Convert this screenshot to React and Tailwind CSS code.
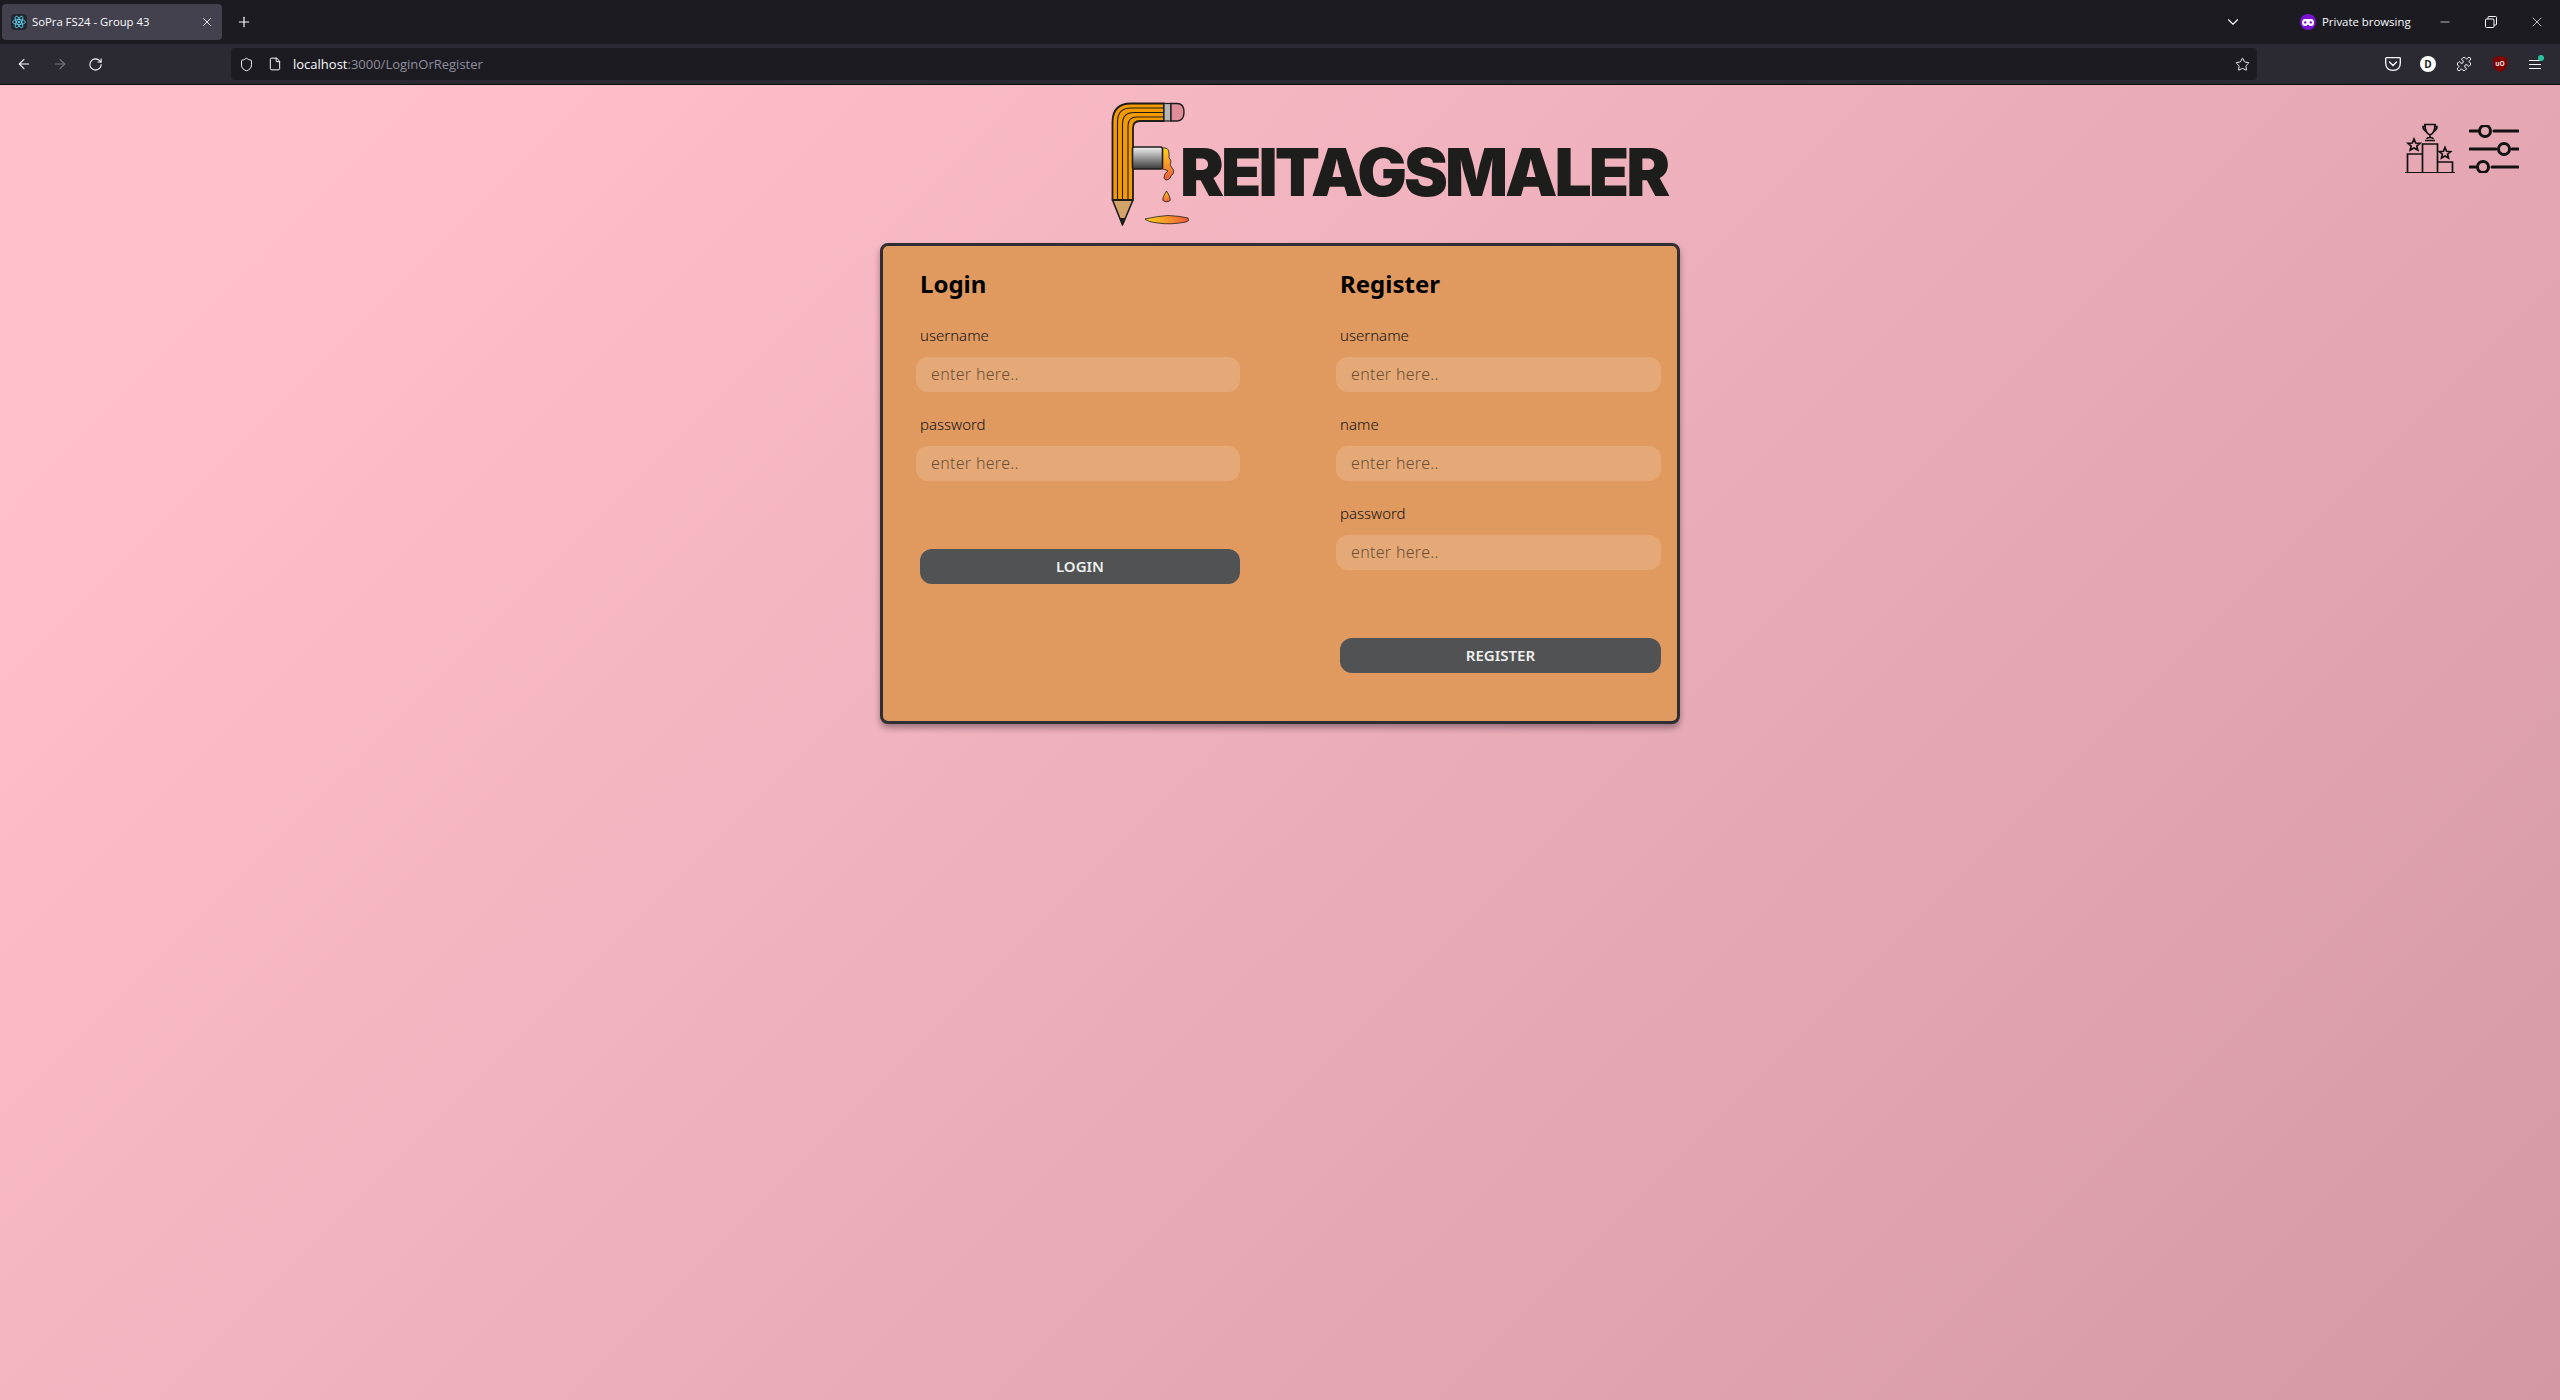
import { ArrowLeft, ArrowRight, RotateCw, Shield, File, Star, X, Plus, ChevronDown, Minus, Puzzle } from 'lucide-react';

const uiFont = "font-['Open_Sans','Noto_Sans',sans-serif]";

function PencilLogo() {
  return (
    <svg width="130" height="150" viewBox="0 0 130 150" className="shrink-0">
      <defs>
        <linearGradient id="metal" x1="0" y1="0" x2="0" y2="1">
          <stop offset="0" stopColor="#f2f2f2" />
          <stop offset="0.55" stopColor="#8d8d8d" />
          <stop offset="1" stopColor="#3a3a3a" />
        </linearGradient>
        <linearGradient id="paint" x1="0" y1="0" x2="0" y2="1">
          <stop offset="0" stopColor="#ffd319" />
          <stop offset="1" stopColor="#ee5b3c" />
        </linearGradient>
        <linearGradient id="puddle" x1="0" y1="0" x2="1" y2="0">
          <stop offset="0" stopColor="#ffd319" />
          <stop offset="1" stopColor="#ee5b3c" />
        </linearGradient>
      </defs>
      {/* pencil tip */}
      <path d="M22.5 110 L43 110 L32.5 135 Z" fill="#d4a36a" stroke="#1d1d1b" strokeWidth="1.6" strokeLinejoin="round" />
      <path d="M29.5 128 L35.5 128 L32.5 135 Z" fill="#1d1d1b" />
      {/* body */}
      <path d="M22.5 110 V32 Q22.5 13.5 41 13.5 H74 V31 H50 Q43 31 43 38 V110 Z" fill="#f59a00" stroke="#1d1d1b" strokeWidth="1.8" strokeLinejoin="round" />
      <path d="M27.5 110 V32 Q27.5 18 41 18 H74" fill="none" stroke="#1d1d1b" strokeWidth="1.1" />
      <path d="M32.5 110 V34 Q32.5 22.5 44 22.5 H74" fill="none" stroke="#1d1d1b" strokeWidth="1.1" />
      <path d="M38 110 V36 Q38 27 47 27 H74" fill="none" stroke="#1d1d1b" strokeWidth="1.1" />
      {/* band and eraser */}
      <rect x="74" y="13.5" width="7" height="17.5" fill="#b5b5b5" stroke="#1d1d1b" strokeWidth="1.2" />
      <path d="M81 13.5 H87 Q94 13.5 94 22 Q94 31 87 31 H81 Z" fill="#df8d99" stroke="#1d1d1b" strokeWidth="1.4" />
      {/* paint running out of the tube */}
      <path d="M72 58 Q79 57 79 63 Q78 68 81 71 Q79 75 82 78 Q85 80 83 84 Q81 85 80 88 Q76 92 74 88 Q74 83 78 81 Q75 79 72 79 Z" fill="url(#paint)" stroke="#1d1d1b" strokeWidth="0.8" />
      <rect x="42.5" y="57" width="30" height="22" rx="2" fill="url(#metal)" stroke="#1d1d1b" strokeWidth="1.6" />
      {/* drop and puddle */}
      <path d="M76.5 101 Q82 110 79.5 111 Q76.5 112.5 73.5 111 Q71 110 76.5 101 Z" fill="url(#paint)" stroke="#1d1d1b" strokeWidth="0.8" />
      <path d="M55 129 Q68 126 78 125.5 Q90 126 98 128 Q100 131 96 132 Q80 135 68 133 Q58 132 55 129 Z" fill="url(#puddle)" stroke="#1d1d1b" strokeWidth="0.8" />
    </svg>
  );
}

function PodiumIcon() {
  return (
    <svg width="50" height="50" viewBox="0 0 50 50" fill="none" stroke="#111" strokeWidth="1.7" className="shrink-0">
      <path d="M0 50 H50" strokeWidth="1.8" />
      <path d="M2.5 50 V31 H17.5 M17.5 50 V21 H32.5 V50 M32.5 39 H47.5 V50" />
      <path d="M19 1.5 H31 M20 1.5 C20 8 22 11 25 12 C28 11 30 8 30 1.5 M20 3.5 H18 C18 7 20 8 22 9 M30 3.5 H32 C32 7 30 8 28 9 M25 12 V15 M22 16 C22 14 28 14 28 16 M20 17.5 H30" />
      <path d="M9 16 L10.7 20 L15 20.3 L11.8 23 L12.8 27 L9 24.9 L5.2 27 L6.2 23 L3 20.3 L7.3 20 Z" />
      <path d="M40 24.5 L41.6 28.3 L45.6 28.6 L42.6 31.2 L43.5 35 L40 33 L36.5 35 L37.4 31.2 L34.4 28.6 L38.4 28.3 Z" />
    </svg>
  );
}

function SlidersIcon() {
  return (
    <svg width="50" height="48" viewBox="0 0 50 48" fill="none" stroke="#111" strokeWidth="3" strokeLinecap="round" className="shrink-0 mt-[2px]">
      <path d="M1 6 H9 M25 6 H49" />
      <circle cx="16" cy="6" r="5.5" />
      <path d="M1 24 H27 M43 24 H49" />
      <circle cx="35" cy="24" r="5.5" />
      <path d="M1 42 H7 M23 42 H49" />
      <circle cx="14" cy="42" r="5.5" />
    </svg>
  );
}

function ReactFavicon() {
  return (
    <div className="w-4 h-4 rounded-sm bg-[#23272f] flex items-center justify-center shrink-0">
      <svg width="14" height="14" viewBox="-12 -12 24 24" fill="none" stroke="#61dafb" strokeWidth="1.4">
        <circle r="2" fill="#61dafb" stroke="none" />
        <ellipse rx="11" ry="4.2" />
        <ellipse rx="11" ry="4.2" transform="rotate(60)" />
        <ellipse rx="11" ry="4.2" transform="rotate(120)" />
      </svg>
    </div>
  );
}

function BrowserChrome() {
  return (
    <div className={`${uiFont} shrink-0`}>
      {/* tab strip */}
      <div className="h-11 bg-[#1c1b22] flex items-center text-[#fbfbfe]">
        <div className="ml-[2px] w-[220px] h-9 rounded bg-[#42414d] flex items-center pl-[9px] pr-[8px]">
          <ReactFavicon />
          <span className="ml-[5px] text-[11.3px] flex-1 whitespace-nowrap">SoPra FS24 - Group 43</span>
          <X size={14} strokeWidth={1.5} />
        </div>
        <Plus size={16} strokeWidth={1.8} className="ml-[14px]" />
        <div className="flex-1" />
        <ChevronDown size={18} strokeWidth={1.5} />
        <div className="ml-[58px] w-[16px] h-[16px] rounded-full bg-[#7a12d4] flex items-center justify-center">
          <svg width="12" height="7" viewBox="0 0 12 7">
            <path d="M3 0 H9 Q12 0 12 3.5 Q12 7 9 7 Q7.5 7 6 5.5 Q4.5 7 3 7 Q0 7 0 3.5 Q0 0 3 0 Z" fill="#fff" />
            <circle cx="3.2" cy="3.4" r="1.2" fill="#7a12d4" />
            <circle cx="8.8" cy="3.4" r="1.2" fill="#7a12d4" />
          </svg>
        </div>
        <span className="ml-[6px] text-[11.4px] w-[88px] whitespace-nowrap">Private browsing</span>
        <Minus size={14} strokeWidth={1.2} className="ml-[28px]" />
        <svg width="12" height="12" viewBox="0 0 12 12" fill="none" stroke="#fbfbfe" className="ml-[33px]">
          <rect x="0.5" y="3" width="8.5" height="8.5" rx="1" />
          <path d="M3 3 V1.5 Q3 .5 4 .5 H10.5 Q11.5 .5 11.5 1.5 V8 Q11.5 9 10.5 9 H9" />
        </svg>
        <X size={16} strokeWidth={1.1} className="ml-[32px] mr-[15px]" />
      </div>
      {/* nav bar */}
      <div className="h-[41px] bg-[#2b2a33] border-b border-[#0c0c0d] flex items-center text-[#fbfbfe]">
        <ArrowLeft size={16} strokeWidth={1.6} className="ml-[16px]" />
        <ArrowRight size={16} strokeWidth={1.6} className="ml-[20px] text-[#77767c]" />
        <RotateCw size={15} strokeWidth={1.7} className="ml-[20px]" />
        <div className="ml-[128px] flex-1 h-8 rounded bg-[#1c1b22] flex items-center pl-[8px] pr-[7px]">
          <Shield size={15} strokeWidth={1.5} />
          <File size={14} strokeWidth={1.7} className="ml-[14px]" />
          <span className="ml-[11px] mt-[1px] text-[13px] whitespace-nowrap">localhost<span className="text-[#8f8f9d]">:3000/LoginOrRegister</span></span>
          <div className="flex-1" />
          <Star size={15} strokeWidth={1.5} />
        </div>
        {/* pocket */}
        <svg width="16" height="14" viewBox="0 0 16 14" fill="none" stroke="#fbfbfe" strokeWidth="1.3" className="ml-[128px]">
          <path d="M1.5 .7 H14.5 Q15.3 .7 15.3 1.5 V6 Q15.3 13.3 8 13.3 Q.7 13.3 .7 6 V1.5 Q.7 .7 1.5 .7 Z" />
          <path d="M4.5 5 L8 8.5 L11.5 5" strokeLinecap="round" />
        </svg>
        <div className="ml-[19px] w-4 h-4 rounded-full bg-white text-[#1c1b22] text-[10px] font-bold flex items-center justify-center">D</div>
        <Puzzle size={16} strokeWidth={1.5} className="ml-[20px]" />
        <svg width="14" height="16" viewBox="0 0 14 16" className="ml-[21px]">
          <path d="M7 0 L14 2 V8 Q14 13 7 16 Q0 13 0 8 V2 Z" fill="#800000" />
          <text x="7" y="10" textAnchor="middle" fontSize="6.5" fontWeight="700" fill="#e8e8e8">uO</text>
        </svg>
        <div className="relative ml-[22px] mr-[19px] w-3 flex flex-col gap-[3px]">
          <div className="h-px bg-[#fbfbfe]" />
          <div className="h-px bg-[#fbfbfe]" />
          <div className="h-px bg-[#fbfbfe]" />
          <div className="absolute -top-[5px] -right-[3px] w-[6px] h-[6px] rounded-full bg-[#2ac3a2]" />
        </div>
      </div>
    </div>
  );
}

function Field({ label }) {
  return (
    <div>
      <label className="block pl-1 text-[15px] leading-[22px] font-light text-[#111]">{label}</label>
      <input
        placeholder="enter here.."
        className="mt-[11px] block w-full h-[35px] rounded-xl bg-white/15 pl-[15px] pb-[2px] text-[16px] font-light tracking-[0.3px] outline-none placeholder:text-[#6e4f35]"
      />
    </div>
  );
}

function FormColumn({ title, fields, action, width }) {
  return (
    <div className={width}>
      <h2 className="pl-1 text-[24px] leading-[32px] font-bold text-black">{title}</h2>
      <div className="mt-[24px] flex flex-col gap-[21px]">
        {fields.map((f) => <Field key={f} label={f} />)}
      </div>
      <button className="mt-[68px] ml-1 block w-[calc(100%-4px)] h-[35px] rounded-xl bg-[#505254] text-[#eeeeee] text-[15px] font-semibold">
        {action}
      </button>
    </div>
  );
}

export default function App() {
  return (
    <div className="h-[1400px] flex flex-col overflow-hidden font-['Noto_Sans','Open_Sans',sans-serif]">
      <BrowserChrome />
      <main className="flex-1 bg-[linear-gradient(135deg,#ffc0cb_10%,#d498a4_100%)]">
        <div className="h-[158px] grid grid-cols-[1090px_auto_1fr]">
          <div />
          <div className="mt-[5px] flex items-start">
            <PencilLogo />
            <span className="-ml-[40px] mt-[43px] text-[66px] leading-[78px] font-black tracking-[-3px] text-[#1d1d1b] font-['Inter',sans-serif] whitespace-nowrap">REITAGSMALER</span>
          </div>
          <div className="flex justify-end items-start gap-[14px] pt-[38px] pr-[41px]">
            <PodiumIcon />
            <SlidersIcon />
          </div>
        </div>
        <div className="mx-auto w-[800px] h-[481px] rounded-lg border-[3px] border-[#2f2f33] bg-[#e09a60] shadow-[0_4px_6px_rgba(0,0,0,0.35)] flex pt-[22px] pl-[33px] gap-[96px]">
          <FormColumn title="Login" fields={['username', 'password']} action="LOGIN" width="w-[324px]" />
          <FormColumn title="Register" fields={['username', 'name', 'password']} action="REGISTER" width="w-[325px]" />
        </div>
      </main>
    </div>
  );
}
